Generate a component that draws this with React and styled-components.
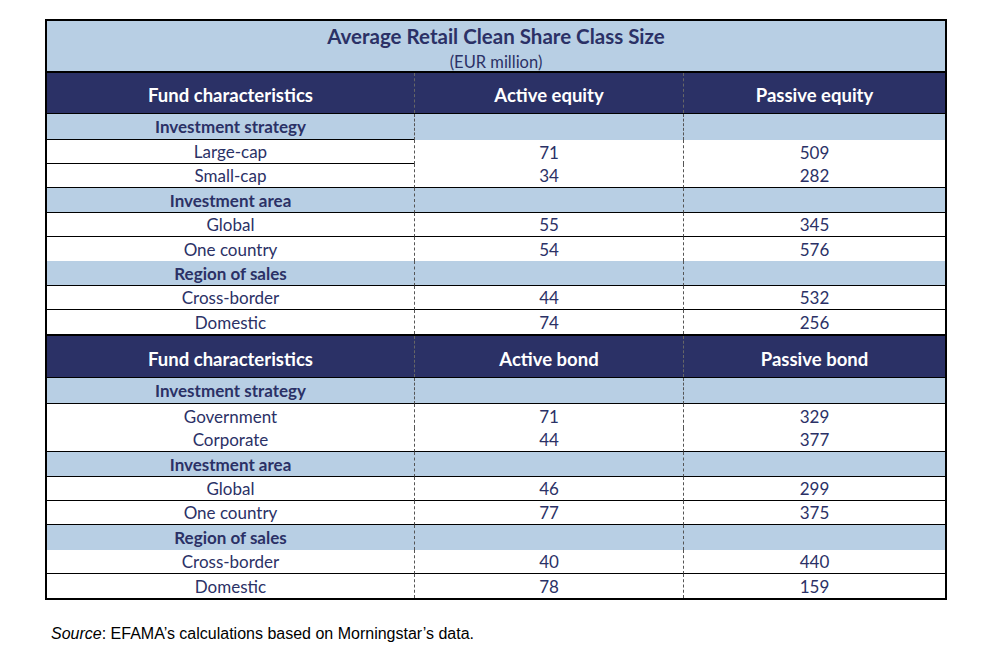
import styled, { createGlobalStyle } from 'styled-components';

const GlobalStyle = createGlobalStyle`
  body {
    margin: 0;
    background: #ffffff;
    font-family: 'Lato', 'Liberation Sans', sans-serif;
  }
`;

const sections = [
  {
    cols: ['Fund characteristics', 'Active equity', 'Passive equity'],
    groups: [
      {
        title: 'Investment strategy',
        line: 'first',
        rows: [
          { label: 'Large-cap', a: '71', b: '509', line: 'first' },
          { label: 'Small-cap', a: '34', b: '282', line: 'all' },
        ],
      },
      {
        title: 'Investment area',
        line: 'all',
        rows: [
          { label: 'Global', a: '55', b: '345', line: 'all' },
          { label: 'One country', a: '54', b: '576', line: 'none' },
        ],
      },
      {
        title: 'Region of sales',
        line: 'all',
        rows: [
          { label: 'Cross-border', a: '44', b: '532', line: 'all' },
          { label: 'Domestic', a: '74', b: '256', line: 'none' },
        ],
      },
    ],
  },
  {
    cols: ['Fund characteristics', 'Active bond', 'Passive bond'],
    groups: [
      {
        title: 'Investment strategy',
        line: 'all',
        rows: [
          { label: 'Government', a: '71', b: '329', line: 'none' },
          { label: 'Corporate', a: '44', b: '377', line: 'all' },
        ],
      },
      {
        title: 'Investment area',
        line: 'all',
        rows: [
          { label: 'Global', a: '46', b: '299', line: 'all' },
          { label: 'One country', a: '77', b: '375', line: 'all' },
        ],
      },
      {
        title: 'Region of sales',
        line: 'none',
        rows: [
          { label: 'Cross-border', a: '40', b: '440', line: 'all' },
          { label: 'Domestic', a: '78', b: '159', line: 'none' },
        ],
      },
    ],
  },
];

function hasLine(line, col) {
  if (line === 'all') return true;
  if (line === 'first') return col === 0;
  return false;
}

export default function App() {
  return (
    <Page>
      <GlobalStyle />
      <Table>
        <TitleBand>
          <Title>Average Retail Clean Share Class Size</Title>
          <Subtitle>(EUR million)</Subtitle>
        </TitleBand>
        {sections.map((section, si) => (
          <div key={si}>
            <HeaderRow $first={si === 0}>
              {section.cols.map((c, ci) => (
                <HeaderCell key={c} $dashed={ci > 0}>
                  {c}
                </HeaderCell>
              ))}
            </HeaderRow>
            {section.groups.map((group, gi) => (
              <div key={group.title}>
                <Row $height={gi === 0 ? 26 : 25}>
                  {[group.title, '', ''].map((t, ci) => (
                    <Cell key={ci} $band $bold $dashed={ci > 0} $line={hasLine(group.line, ci)}>
                      {t}
                    </Cell>
                  ))}
                </Row>
                {group.rows.map((r) => (
                  <Row key={r.label} $height={24}>
                    {[r.label, r.a, r.b].map((t, ci) => (
                      <Cell key={ci} $dashed={ci > 0} $line={hasLine(r.line, ci)}>
                        {t}
                      </Cell>
                    ))}
                  </Row>
                ))}
              </div>
            ))}
          </div>
        ))}
      </Table>
      <Source>
        <em>Source</em>: EFAMA’s calculations based on Morningstar’s data.
      </Source>
    </Page>
  );
}

const Page = styled.div`
  padding: 19px 0 0 45px;
`;

const Table = styled.div`
  width: 902px;
  box-sizing: border-box;
  border: 2px solid #000;
`;

const TitleBand = styled.div`
  height: 50px;
  background: #b8cfe4;
  display: flex;
  flex-direction: column;
  align-items: center;
  color: #2b3166;
`;

const Title = styled.div`
  margin-top: 2px;
  font-size: 20.5px;
  font-weight: 700;
  line-height: 26px;
`;

const Subtitle = styled.div`
  margin-top: 4px;
  font-size: 16.5px;
  line-height: 18px;
`;

const grid = `
  display: grid;
  grid-template-columns: 367px 269px 1fr;
`;

const HeaderRow = styled.div`
  ${grid}
  height: ${(p) => (p.$first ? 43 : 44)}px;
  box-sizing: border-box;
  background: #2b3166;
  border-top: 2px solid #000;
  border-bottom: 1px solid #000;
`;

const HeaderCell = styled.div`
  display: flex;
  align-items: center;
  justify-content: center;
  padding-top: 4px;
  color: #ffffff;
  font-size: 18.5px;
  font-weight: 700;
  border-left: ${(p) => (p.$dashed ? '1px dashed #666' : 'none')};
`;

const Row = styled.div`
  ${grid}
  height: ${(p) => p.$height}px;
`;

const Cell = styled.div`
  display: flex;
  align-items: center;
  justify-content: center;
  box-sizing: border-box;
  background: ${(p) => (p.$band ? '#b8cfe4' : '#ffffff')};
  color: #2b3166;
  font-size: 17px;
  font-weight: ${(p) => (p.$bold ? 700 : 400)};
  border-left: ${(p) => (p.$dashed ? '1px dashed #555' : 'none')};
  border-bottom: ${(p) => (p.$line ? '1px solid #000' : 'none')};
`;

const Source = styled.div`
  margin-top: 25px;
  margin-left: 6px;
  font-family: 'Liberation Sans', Arial, sans-serif;
  font-size: 16px;
  line-height: 18px;
  color: #000;
`;
